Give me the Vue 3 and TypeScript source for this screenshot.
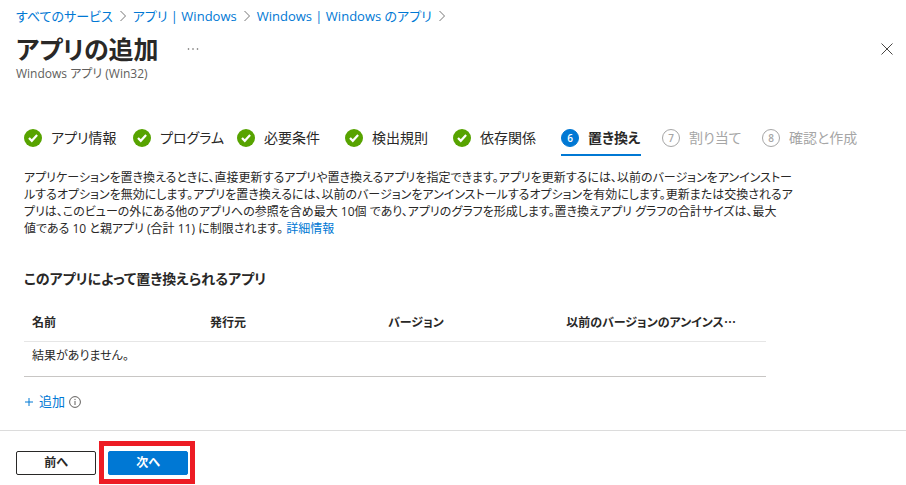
<script setup lang="ts">
type StepState = 'done' | 'current' | 'pending'

interface Step {
  label: string
  state: StepState
}

const crumbs: string[] = ['すべてのサービス', 'アプリ | Windows', 'Windows | Windows のアプリ']

const steps: Step[] = [
  { label: 'アプリ情報', state: 'done' },
  { label: 'プログラム', state: 'done' },
  { label: '必要条件', state: 'done' },
  { label: '検出規則', state: 'done' },
  { label: '依存関係', state: 'done' },
  { label: '置き換え', state: 'current' },
  { label: '割り当て', state: 'pending' },
  { label: '確認と作成', state: 'pending' },
]

const columns: string[] = ['名前', '発行元', 'バージョン', '以前のバージョンのアンインス⋯']
</script>

<template>
  <div class="page">
    <header class="header">
      <nav class="crumbs" aria-label="階層リンク">
        <template v-for="crumb in crumbs" :key="crumb">
          <a href="#">{{ crumb }}</a>
          <svg class="chevron" viewBox="0 0 8 12" aria-hidden="true"><path d="M1.5 1 6.5 6l-5 5" /></svg>
        </template>
      </nav>
      <div class="title-row">
        <h1>アプリの追加</h1>
        <button class="icon-button more" type="button" aria-label="その他">
          <svg viewBox="0 0 12 4" aria-hidden="true">
            <circle cx="1.5" cy="2" r="0.8" /><circle cx="6" cy="2" r="0.8" /><circle cx="10.5" cy="2" r="0.8" />
          </svg>
        </button>
        <button class="icon-button close" type="button" aria-label="閉じる">
          <svg viewBox="0 0 12 12" aria-hidden="true"><path d="m.5.5 11 11M11.5.5l-11 11" /></svg>
        </button>
      </div>
      <p class="subtitle">Windows アプリ (Win32)</p>
    </header>

    <main class="content">
      <ol class="steps">
        <li v-for="(step, index) in steps" :key="step.label">
          <a href="#" class="step" :class="step.state" :aria-current="step.state === 'current' ? 'step' : undefined">
            <svg v-if="step.state === 'done'" class="badge" viewBox="0 0 18 18" aria-hidden="true">
              <circle cx="9" cy="9" r="9" fill="#57a300" />
              <path d="m5 8.9 2.8 2.9 5.3-5.7" fill="none" stroke="#fff" stroke-width="2.2" />
            </svg>
            <span v-else class="badge number">{{ index + 1 }}</span>
            <span>{{ step.label }}</span>
          </a>
        </li>
      </ol>

      <p class="description">
        アプリケーションを置き換えるときに、直接更新するアプリや置き換えるアプリを指定できます。アプリを更新するには、以前のバージョンをアンインストー<br />ルするオプションを無効にします。アプリを置き換えるには、以前のバージョンをアンインストールするオプションを有効にします。更新または交換されるア<br />プリは、このビューの外にある他のアプリへの参照を含め最大 10個 であり、アプリのグラフを形成します。置き換えアプリ グラフの合計サイズは、最大<br />値である 10 と親アプリ (合計 11) に制限されます。 <a href="#">詳細情報</a>
      </p>

      <h2>このアプリによって置き換えられるアプリ</h2>
      <table>
        <thead>
          <tr>
            <th v-for="column in columns" :key="column" scope="col">{{ column }}</th>
          </tr>
        </thead>
        <tbody>
          <tr>
            <td :colspan="columns.length">結果がありません。</td>
          </tr>
        </tbody>
      </table>

      <div class="add-row">
        <a href="#" class="add">
          <svg class="plus" viewBox="0 0 10 10" aria-hidden="true"><path d="M5 1v8M1 5h8" /></svg>
          追加
        </a>
        <svg class="info" viewBox="0 0 12 12" aria-hidden="true">
          <circle cx="6" cy="6" r="5.4" />
          <path d="M6 5v4M6 2.9v1.2" />
        </svg>
      </div>
    </main>

    <footer class="footer">
      <button class="button" type="button">前へ</button>
      <div class="highlight">
        <button class="button primary" type="button">次へ</button>
      </div>
    </footer>
  </div>
</template>

<style>
body {
  margin: 0;
  background: #fff;
}
</style>

<style scoped>
.page {
  font-family: 'Open Sans', 'Noto Sans CJK JP', sans-serif;
  font-feature-settings: 'palt';
  font-size: 12px;
  line-height: 17px;
  color: #292827;
  white-space: nowrap;
}

a {
  color: #0078d4;
  text-decoration: none;
}

button {
  font: inherit;
  font-feature-settings: inherit;
  box-sizing: border-box;
  cursor: pointer;
}

.header {
  padding: 6px 13px 0 16px;
}

.crumbs {
  display: flex;
  align-items: center;
  gap: 6px;
  font-size: 13px;
  line-height: 20px;
}

.chevron {
  width: 8px;
  height: 12px;
  fill: none;
  stroke: #767676;
}

.title-row {
  display: flex;
  align-items: center;
  height: 34px;
  margin-top: 6px;
}

h1 {
  margin: 0;
  font-size: 25px;
  line-height: 32px;
  font-weight: 700;
}

.icon-button {
  display: flex;
  padding: 0;
  border: 0;
  background: none;
}

.more {
  margin-left: 28px;
}

.more svg {
  width: 12px;
  height: 4px;
  fill: #605e5c;
}

.close {
  margin-left: auto;
}

.close svg {
  width: 12px;
  height: 12px;
  stroke: #484644;
}

.subtitle {
  margin: 0;
  font-size: 12px;
  line-height: 16px;
  color: #605e5c;
}

.content {
  padding: 43px 24px 0;
}

.steps {
  display: grid;
  grid-template-columns: 109px 104px 108px 108px 108px 101px 100px auto;
  justify-content: start;
  justify-items: start;
  margin: 0;
  padding: 0;
  list-style: none;
  font-size: 14px;
  line-height: 20px;
}

.step {
  display: flex;
  align-items: center;
  gap: 9px;
  padding: 3px 0 6px;
  border-bottom: 2px solid transparent;
  color: #292827;
}

.badge {
  width: 18px;
  height: 18px;
  box-sizing: border-box;
}

.number {
  border: 1px solid #a6a6a6;
  border-radius: 50%;
  font-size: 10px;
  line-height: 16px;
  font-weight: 600;
  text-align: center;
}

.current {
  border-color: #0078d4;
  font-weight: 700;
}

.current .number {
  border-color: #0078d4;
  background: #0078d4;
  color: #fff;
}

.pending {
  color: #a6a6a6;
}

.description {
  margin: 13px 0 0;
}

h2 {
  margin: 32px 0 0;
  font-size: 14px;
  line-height: 20px;
  font-weight: 700;
}

table {
  width: calc(100% - 116px);
  margin-top: 16px;
  border-collapse: collapse;
  table-layout: fixed;
}

th,
td {
  padding: 9px 8px 10px;
  text-align: left;
}

th {
  width: 24%;
  box-sizing: border-box;
  border-bottom: 1px solid #e6e6e6;
  font-weight: 700;
}

th:last-child {
  width: 28%;
}

td {
  padding: 5px 8px 12px;
  border-bottom: 1px solid #c8c6c4;
}

.add-row {
  display: flex;
  align-items: center;
  gap: 4px;
  margin-top: 16px;
  font-size: 13px;
}

.add {
  display: flex;
  align-items: center;
  gap: 5px;
}

.plus {
  width: 10px;
  height: 10px;
  stroke: #0078d4;
}

.info {
  width: 12px;
  height: 12px;
  fill: none;
  stroke: #605e5c;
}

.footer {
  display: flex;
  align-items: center;
  gap: 3px;
  margin-top: 20px;
  padding: 10px 16px 0;
  border-top: 1px solid #dcdcdc;
}

.button {
  display: block;
  width: 80px;
  height: 24px;
  padding: 0;
  border: 1px solid #292827;
  border-radius: 2px;
  background: #fff;
  color: #292827;
  font-weight: 600;
  line-height: 20px;
}

.primary {
  border-color: #0078d4;
  background: #0078d4;
  color: #fff;
}

.highlight {
  padding: 5px 2px 4px 4px;
  border: 5px solid #ed1c24;
}
</style>
